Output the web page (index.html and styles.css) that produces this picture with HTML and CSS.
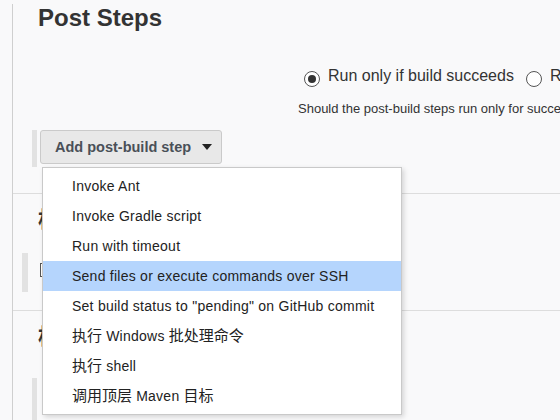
FILE: index.html
```html
<!DOCTYPE html>
<html lang="zh-CN">
<head>
    <meta charset="UTF-8">
    <title>Post Steps</title>
    <link rel="stylesheet" href="styles.css">
</head>
<body>
    <div class="main">
        <div class="head">
            <h1>Post Steps</h1>

            <div class="options">
                <div class="radio-row">
                    <span class="radio checked"></span>
                    <span class="radio-label">Run only if build succeeds</span>
                    <span class="radio"></span>
                    <span class="radio-label">Run only if build succeeds or is unstable</span>
                </div>
                <div class="help">Should the post-build steps run only for successful builds, etc.</div>
            </div>

            <div class="step-row">
                <span class="handle"></span>
                <button class="add-btn">Add post-build step <span class="caret"></span></button>

                <ul class="menu">
                    <li>Invoke Ant</li>
                    <li>Invoke Gradle script</li>
                    <li>Run with timeout</li>
                    <li class="active">Send files or execute commands over SSH</li>
                    <li>Set build status to "pending" on GitHub commit</li>
                    <li><span class="zh">执行</span> Windows <span class="zh">批处理命令</span></li>
                    <li><span class="zh">执行</span> shell</li>
                    <li><span class="zh">调用顶层</span> Maven <span class="zh">目标</span></li>
                </ul>
            </div>
        </div>

        <div class="section first">
            <h2>构</h2>
            <div class="setting-row">
                <span class="handle wide"></span>
                <span class="checkbox"></span>
            </div>
        </div>

        <div class="section">
            <h2>构</h2>
            <span class="handle low"></span>
        </div>
    </div>
</body>
</html>
```

FILE: styles.css
```css
html, body {
    margin: 0;
    padding: 0;
    overflow: hidden;
}
body {
    background: #f9f9fa;
    font-family: "Liberation Sans", Arial, "Noto Sans CJK SC", sans-serif;
    color: #333;
}
.main {
    margin-left: 12px;
    border-left: 1px solid #cfcfcf;
    min-height: 420px;
}
.head {
    padding-left: 25px;
}
h1 {
    margin: 4px 0 0;
    font-size: 24px;
    line-height: 28px;
    font-weight: bold;
    color: #333;
}
.options {
    margin-left: 260px;
    margin-top: 33px;
}
.radio-row {
    display: flex;
    align-items: flex-start;
    margin-left: 6px;
    white-space: nowrap;
    font-size: 16px;
    line-height: 22px;
}
.radio {
    flex: none;
    width: 16px;
    height: 16px;
    box-sizing: border-box;
    border: 1px solid #555;
    border-radius: 50%;
    background: #fff;
    margin-top: 6px;
    display: flex;
    align-items: center;
    justify-content: center;
}
.radio.checked::after {
    content: "";
    width: 8px;
    height: 8px;
    border-radius: 50%;
    background: #333;
}
.radio-label {
    margin-left: 8px;
    margin-right: 12px;
    color: #333;
}
.help {
    margin-top: 14px;
    font-size: 13px;
    line-height: 16px;
    white-space: nowrap;
    color: #333;
}
.step-row {
    position: relative;
    display: flex;
    gap: 3px;
    margin-left: -6px;
    margin-top: 13px;
}
.handle {
    display: block;
    width: 5px;
    height: 37px;
    background: #e2e2e2;
}
.add-btn {
    height: 34px;
    padding: 0 9px 0 14px;
    border: 1px solid #cacaca;
    border-radius: 3px;
    background: #e8e8e8;
    font-family: "Liberation Sans", Arial, sans-serif;
    font-size: 14.5px;
    font-weight: bold;
    color: #4a5058;
    display: flex;
    align-items: center;
    gap: 11px;
}
.caret {
    width: 0;
    height: 0;
    border-left: 5px solid transparent;
    border-right: 5px solid transparent;
    border-top: 6px solid #222;
}
.menu {
    position: absolute;
    top: 37px;
    left: 10px;
    width: 360px;
    box-sizing: border-box;
    margin: 0;
    padding: 3px 0;
    list-style: none;
    background: #fff;
    border: 1px solid #c9c9c9;
    box-shadow: 2px 2px 5px rgba(0, 0, 0, 0.15);
    z-index: 10;
}
.menu li {
    height: 30px;
    line-height: 30px;
    padding-left: 29px;
    font-size: 14px;
    letter-spacing: 0.25px;
    color: #222;
    white-space: nowrap;
}
.menu li .zh {
    font-family: "Noto Sans CJK SC", sans-serif;
    font-size: 15px;
    line-height: 1;
    letter-spacing: 0;
}
.menu li.active {
    background: #b5d5fd;
}
.section {
    border-top: 1px solid #dddddd;
    padding-top: 10px;
}
.section.first {
    margin-top: 26px;
    padding-bottom: 18px;
}
h2 {
    margin: 0 0 0 25px;
    font-family: "Noto Sans CJK SC", sans-serif;
    font-size: 22px;
    line-height: 26px;
    font-weight: bold;
    color: #333;
}
.setting-row {
    display: flex;
    margin-top: 23px;
    padding-left: 9px;
    gap: 12px;
}
.handle.wide {
    width: 6px;
    height: 39px;
}
.checkbox {
    width: 14px;
    height: 14px;
    margin-top: 10px;
    box-sizing: border-box;
    border: 1px solid #555;
    background: #fff;
}
.handle.low {
    margin: 31px 0 0 19px;
    height: 42px;
}
```
